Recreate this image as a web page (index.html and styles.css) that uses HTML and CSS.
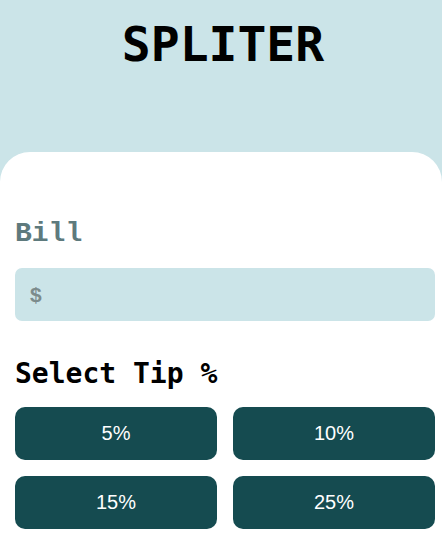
FILE: index.html
```html
<!DOCTYPE html>
<html lang="en">
  <head>
    <meta charset="UTF-8" />
    <meta name="viewport" content="width=device-width, initial-scale=1.0" />
    <title>Spliter</title>
    <link rel="stylesheet" href="styles.css">
  </head>
  <body>
    <header class="top">
      <h1 class="logo">SPLITER</h1>
    </header>
    <main class="card">
      <label class="label-bill" for="bill">Bill</label>
      <div class="field">
        <span class="dollar">$</span>
        <input id="bill" type="text" />
      </div>
      <h2 class="label-tip">Select Tip %</h2>
      <div class="tips">
        <button class="tip">5%</button>
        <button class="tip">10%</button>
        <button class="tip">15%</button>
        <button class="tip">25%</button>
      </div>
    </main>
  </body>
</html>
```

FILE: styles.css
```css
html,
body {
  margin: 0;
  padding: 0;
  background: #cbe4e8;
  font-family: "Liberation Sans", Arial, sans-serif;
}

.top {
  height: 152px;
  display: flex;
  justify-content: center;
}

.logo {
  margin: 0 0 0 4px;
  padding-top: 16px;
  font-family: "DejaVu Sans Mono", monospace;
  font-size: 48px;
  font-weight: bold;
  line-height: 56px;
  color: #000;
}

.card {
  background: #fff;
  border-radius: 30px 30px 0 0;
  padding: 66px 7px 8px 15px;
  min-height: 400px;
  box-sizing: border-box;
}

.label-bill {
  display: block;
  font-family: "Liberation Mono", monospace;
  font-weight: bold;
  font-size: 28px;
  line-height: 32px;
  color: #5e7a7d;
}

.field {
  margin-top: 18px;
  height: 53px;
  border-radius: 7px;
  background: #cbe4e8;
  display: flex;
  align-items: center;
  padding-left: 15px;
}

.dollar {
  font-size: 21px;
  font-weight: bold;
  color: #7c8b8c;
}

.field input {
  flex: 1;
  border: 0;
  background: transparent;
  outline: none;
}

.label-tip {
  margin: 36px 0 0;
  font-family: "DejaVu Sans Mono", monospace;
  font-weight: bold;
  font-size: 28px;
  line-height: 34px;
  color: #000;
}

.tips {
  margin-top: 16px;
  display: grid;
  grid-template-columns: 1fr 1fr;
  gap: 16px;
}

.tip {
  height: 53px;
  border: 0;
  border-radius: 10px;
  background: #154b50;
  color: #fff;
  font-family: "Liberation Sans", Arial, sans-serif;
  font-size: 20px;
}
```
